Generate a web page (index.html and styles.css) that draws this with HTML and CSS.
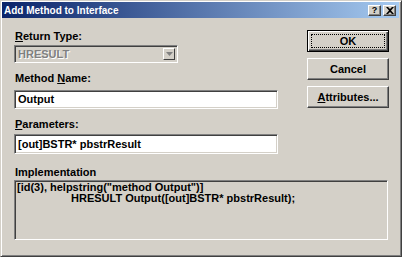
FILE: index.html
```html
<!DOCTYPE html>
<html>
<head>
<meta charset="utf-8">
<link rel="stylesheet" href="styles.css">
</head>
<body>
<div class="window">
  <div class="titlebar">
    <span class="title">Add Method to Interface</span>
    <div class="tbtns">
      <span class="tbtn">?</span>
      <span class="tbtn x">
        <svg width="8" height="7" viewBox="0 0 8 7"><path d="M0 0h2l2 2 2-2h2L5 3.5 8 7H6L4 5 2 7H0l3-3.5z" fill="#000"/></svg>
      </span>
    </div>
  </div>
  <div class="body">
    <div class="top">
      <div class="fields">
        <div class="label lbl-ret"><u>R</u>eturn Type:</div>
        <div class="combo">
          <span class="combo-text">HRESULT</span>
          <span class="combo-btn"><svg width="7" height="4" viewBox="0 0 7 4"><path d="M0 0h7L3.5 4z" fill="#808080"/></svg></span>
        </div>
        <div class="label lbl-name">Method <u>N</u>ame:</div>
        <div class="input">Output</div>
        <div class="label lbl-par"><u>P</u>arameters:</div>
        <div class="input input-par">[out]BSTR* pbstrResult</div>
      </div>
      <div class="buttons">
        <div class="btn default"><span class="focus">OK</span></div>
        <div class="btn">Cancel</div>
        <div class="btn"><span><u>A</u>ttributes...</span></div>
      </div>
    </div>
    <div class="label lbl-impl">Implementation</div>
    <div class="impl">
      <div class="impl-line">[id(3), helpstring("method Output")]</div>
      <div class="impl-line indent">HRESULT Output([out]BSTR* pbstrResult);</div>
    </div>
  </div>
</div>
</body>
</html>
```
FILE: styles.css
```css
html, body {
  margin: 0;
  padding: 0;
}
body {
  width: 402px;
  height: 257px;
  overflow: hidden;
  font-family: "Liberation Sans", Arial, sans-serif;
  font-size: 11px;
  font-weight: bold;
  color: #000;
}
.window {
  box-sizing: border-box;
  width: 402px;
  height: 257px;
  background: #d4d0c8;
  border-top: 1px solid #d4d0c8;
  border-left: 1px solid #d4d0c8;
  border-right: 1px solid #404040;
  border-bottom: 1px solid #404040;
  box-shadow: inset 1px 1px #fff, inset -1px -1px #808080;
  padding: 1px 2px 2px 1px;
  display: flex;
  flex-direction: column;
}
.titlebar {
  height: 16px;
  background: linear-gradient(to right, #0a246a, #a6caf0);
  display: flex;
  align-items: center;
  justify-content: space-between;
  padding: 0 3px 0 2px;
}
.title {
  color: #fff;
  font-size: 10px;
  font-weight: bold;
}
.tbtns {
  display: flex;
  gap: 2px;
}
.tbtn {
  box-sizing: border-box;
  width: 13px;
  height: 11px;
  background: #d4d0c8;
  border-top: 1px solid #fff;
  border-left: 1px solid #fff;
  border-right: 1px solid #404040;
  border-bottom: 1px solid #404040;
  box-shadow: inset -1px -1px #808080;
  font-size: 9px;
  line-height: 9px;
  text-align: center;
  display: flex;
  align-items: center;
  justify-content: center;
}
.body {
  flex: 1;
  display: flex;
  flex-direction: column;
  padding: 0 10px 0 12px;
}
.top {
  display: flex;
  justify-content: space-between;
}
.fields {
  width: 264px;
  display: flex;
  flex-direction: column;
}
.label {
  height: 13px;
  line-height: 13px;
  white-space: nowrap;
}
.lbl-ret { margin-top: 12px; margin-left: 1px; }
.lbl-name { margin-top: 9px; margin-left: 1px; }
.lbl-par { margin-top: 9px; margin-left: 1px; }
.lbl-impl { margin-top: 12px; margin-left: 1px; }
.combo {
  box-sizing: border-box;
  width: 164px;
  height: 18px;
  margin-top: 2px;
  border-top: 1px solid #808080;
  border-left: 1px solid #808080;
  border-right: 1px solid #fff;
  border-bottom: 1px solid #fff;
  box-shadow: inset 1px 1px #404040, inset -1px -1px #d4d0c8;
  background: #d4d0c8;
  display: flex;
  align-items: center;
  justify-content: space-between;
  padding: 2px 2px 2px 3px;
}
.combo-text {
  color: #808080;
  text-shadow: 1px 1px #fff;
}
.combo-btn {
  box-sizing: border-box;
  width: 12px;
  height: 12px;
  background: #d4d0c8;
  border-top: 1px solid #fff;
  border-left: 1px solid #fff;
  border-right: 1px solid #404040;
  border-bottom: 1px solid #404040;
  display: flex;
  align-items: center;
  justify-content: center;
}
.input {
  box-sizing: border-box;
  height: 19px;
  margin-top: 5px;
  background: #fff;
  border-top: 1px solid #808080;
  border-left: 1px solid #808080;
  border-right: 1px solid #fff;
  border-bottom: 1px solid #fff;
  box-shadow: inset 1px 1px #404040, inset -1px -1px #d4d0c8;
  padding: 0 3px;
  line-height: 17px;
}
.input-par {
  height: 20px;
  line-height: 18px;
  margin-top: 3px;
}
.buttons {
  width: 82px;
  margin-top: 12px;
  display: flex;
  flex-direction: column;
  gap: 6px;
}
.btn {
  box-sizing: border-box;
  height: 22px;
  background: #d4d0c8;
  border-top: 1px solid #fff;
  border-left: 1px solid #fff;
  border-right: 1px solid #404040;
  border-bottom: 1px solid #404040;
  box-shadow: inset -1px -1px #808080;
  display: flex;
  align-items: center;
  justify-content: center;
}
.btn.default {
  border: 1px solid #000;
  box-shadow: inset 1px 1px #fff, inset -1px -1px #404040, inset -2px -2px #808080;
  padding: 3px;
}
.focus {
  box-sizing: border-box;
  flex: 1;
  height: 100%;
  border: 1px dotted #000;
  display: flex;
  align-items: center;
  justify-content: center;
}
.impl {
  box-sizing: border-box;
  width: 374px;
  height: 60px;
  margin-top: 1px;
  border-top: 1px solid #808080;
  border-left: 1px solid #808080;
  border-right: 1px solid #fff;
  border-bottom: 1px solid #fff;
  box-shadow: inset 1px 1px #404040, inset -1px -1px #d4d0c8;
  padding: 1px 2px;
}
.impl-line {
  height: 11px;
  line-height: 11px;
  white-space: nowrap;
}
.indent {
  padding-left: 54px;
}
```
